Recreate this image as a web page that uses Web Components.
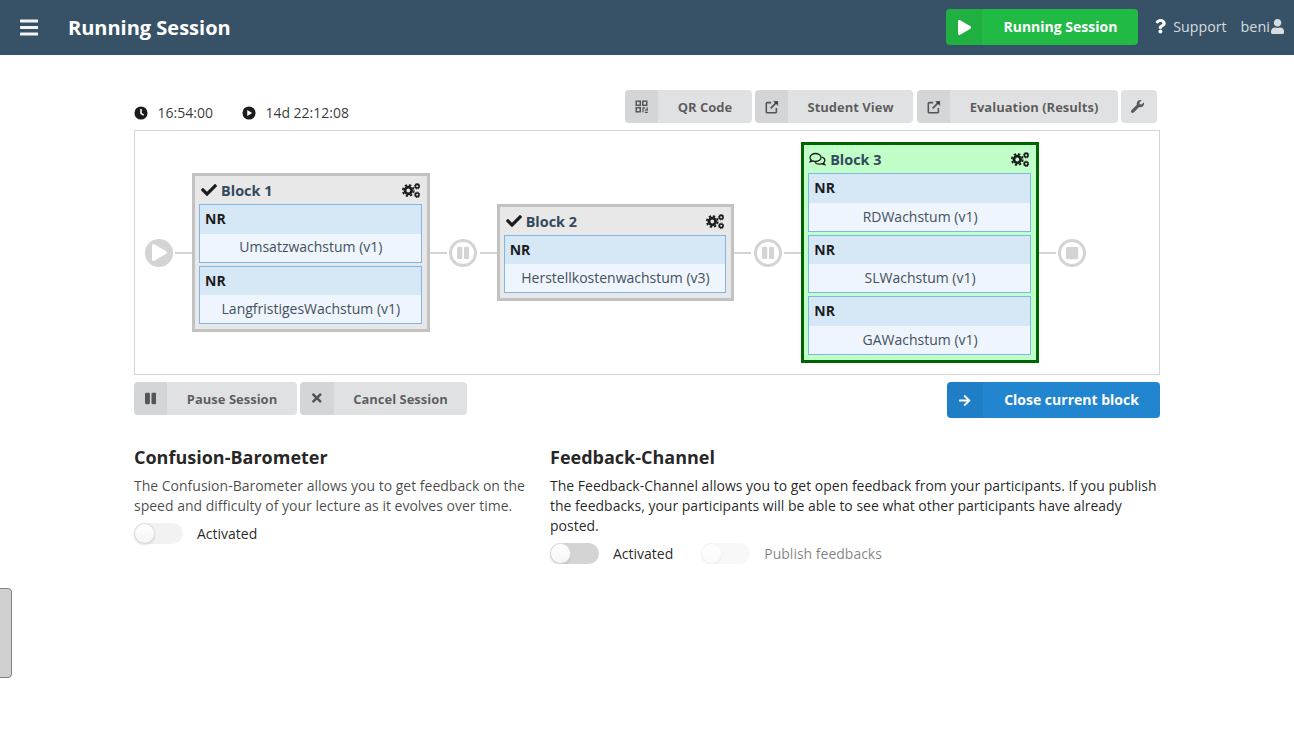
<!DOCTYPE html>
<html lang="en">
<head>
<meta charset="utf-8">
<title>Running Session</title>
<style>
  html, body { margin: 0; padding: 0; background: #fff; }
  body { font-family: "Open Sans", "Liberation Sans", sans-serif; font-size: 14px; color: rgba(0, 0, 0, 0.87); }
</style>
</head>
<body>
<session-page></session-page>

<script>
const ICONS = {
  bars: `<svg viewBox="0 0 448 512"><path d="M16 132h416c8.837 0 16-7.163 16-16V76c0-8.837-7.163-16-16-16H16C7.163 60 0 67.163 0 76v40c0 8.837 7.163 16 16 16zm0 160h416c8.837 0 16-7.163 16-16v-40c0-8.837-7.163-16-16-16H16c-8.837 0-16 7.163-16 16v40c0 8.837 7.163 16 16 16zm0 160h416c8.837 0 16-7.163 16-16v-40c0-8.837-7.163-16-16-16H16c-8.837 0-16 7.163-16 16v40c0 8.837 7.163 16 16 16z"/></svg>`,
  check: `<svg viewBox="0 0 512 512"><path d="M173.898 439.404l-166.4-166.4c-9.997-9.997-9.997-26.206 0-36.204l36.203-36.204c9.997-9.998 26.207-9.998 36.204 0L192 312.69 432.095 72.596c9.997-9.997 26.207-9.997 36.204 0l36.203 36.204c9.997 9.997 9.997 26.206 0 36.204l-294.4 294.401c-9.998 9.997-26.207 9.997-36.204-.001z"/></svg>`,
  play: `<svg viewBox="0 0 448 512"><path d="M424.4 214.7L72.4 6.6C43.8-10.3 0 6.1 0 47.9V464c0 37.5 40.7 60.1 72.4 41.3l352-208c31.4-18.5 31.5-64.1 0-82.6z"/></svg>`,
  pause: `<svg viewBox="0 0 448 512"><path d="M144 479H48c-26.5 0-48-21.5-48-48V79c0-26.5 21.5-48 48-48h96c26.5 0 48 21.5 48 48v352c0 26.5-21.5 48-48 48zm304-48V79c0-26.5-21.5-48-48-48h-96c-26.5 0-48 21.5-48 48v352c0 26.5 21.5 48 48 48h96c26.5 0 48-21.5 48-48z"/></svg>`,
  stop: `<svg viewBox="0 0 448 512"><path d="M400 32H48C21.5 32 0 53.5 0 80v352c0 26.5 21.5 48 48 48h352c26.5 0 48-21.5 48-48V80c0-26.5-21.5-48-48-48z"/></svg>`,
  times: `<svg viewBox="0 0 352 512"><path d="M242.72 256l100.07-100.07c12.28-12.28 12.28-32.19 0-44.48l-22.24-22.24c-12.28-12.28-32.19-12.28-44.48 0L176 189.28 75.93 89.21c-12.28-12.28-32.19-12.28-44.48 0L9.21 111.45c-12.28 12.28-12.28 32.19 0 44.48L109.28 256 9.21 356.07c-12.28 12.28-12.28 32.19 0 44.48l22.24 22.24c12.28 12.28 32.2 12.28 44.48 0L176 322.72l100.07 100.07c12.28 12.28 32.2 12.28 44.48 0l22.24-22.24c12.28-12.28 12.28-32.19 0-44.48L242.72 256z"/></svg>`,
  arrow: `<svg viewBox="0 0 448 512"><path d="M190.5 66.9l22.2-22.2c9.4-9.4 24.6-9.4 33.9 0L441 239c9.4 9.4 9.4 24.6 0 33.9L246.6 467.3c-9.4 9.4-24.6 9.4-33.9 0l-22.2-22.2c-9.5-9.5-9.3-25 .4-34.3L311.4 296H24c-13.3 0-24-10.7-24-24v-32c0-13.3 10.7-24 24-24h287.4L190.9 101.2c-9.8-9.3-10-24.8-.4-34.3z"/></svg>`,
  user: `<svg viewBox="0 0 448 512"><path d="M224 256c70.7 0 128-57.3 128-128S294.7 0 224 0 96 57.3 96 128s57.3 128 128 128zm89.6 32h-16.7c-22.2 10.2-46.9 16-72.9 16s-50.6-5.8-72.9-16h-16.7C60.2 288 0 348.2 0 422.4V464c0 26.5 21.5 48 48 48h352c26.5 0 48-21.5 48-48v-41.6c0-74.2-60.2-134.4-134.4-134.4z"/></svg>`,
  question: `<svg viewBox="0 0 384 512"><path d="M202.021 0C122.202 0 70.503 32.703 29.914 91.026c-7.363 10.58-5.093 25.086 5.178 32.874l43.138 32.709c10.373 7.865 25.132 6.026 33.253-4.148 25.049-31.381 43.63-49.449 82.757-49.449 30.764 0 68.816 19.799 68.816 49.631 0 22.552-18.617 34.134-48.993 51.164-35.423 19.86-82.299 44.576-82.299 106.405V320c0 13.255 10.745 24 24 24h72.471c13.255 0 24-10.745 24-24v-5.773c0-42.86 125.268-44.645 125.268-160.627C377.504 66.256 286.902 0 202.021 0zM192 373.459c-38.196 0-69.271 31.075-69.271 69.271 0 38.195 31.075 69.27 69.271 69.27s69.271-31.075 69.271-69.271-31.075-69.27-69.271-69.27z"/></svg>`,
  wrench: `<svg viewBox="0 0 512 512"><path d="M507.73 109.1c-2.24-9.03-13.54-12.09-20.12-5.51l-74.36 74.36-67.88-11.31-11.31-67.88 74.36-74.36c6.62-6.62 3.43-17.9-5.66-20.16-47.38-11.74-99.55.91-136.58 37.93-39.64 39.64-50.55 97.1-34.05 147.2L18.74 402.76c-24.99 24.99-24.99 65.51 0 90.5 24.99 24.99 65.51 24.99 90.5 0l213.21-213.21c50.12 16.71 107.47 5.68 147.37-34.22 37.07-37.07 49.7-89.32 37.91-136.73z"/></svg>`,
  clock: `<svg viewBox="0 0 16 16"><circle cx="8" cy="8" r="7.5"/><path d="M8 3.5V8.4l3 2" fill="none" stroke="#fff" stroke-width="1.8"/></svg>`,
  playcircle: `<svg viewBox="0 0 16 16"><circle cx="8" cy="8" r="7.5"/><path d="M6 4.6v6.8L11.6 8z" fill="#fff"/></svg>`,
  external: `<svg viewBox="0 0 16 16" fill="none" stroke="currentColor"><path d="M7 3H2.6A1.1 1.1 0 0 0 1.5 4.1v9.3a1.1 1.1 0 0 0 1.1 1.1h9.3a1.1 1.1 0 0 0 1.1-1.1V9" stroke-width="1.8"/><path d="M6.5 9.5L13.2 2.8" stroke-width="2"/><path d="M9.2 1H15v5.8z" fill="currentColor" stroke="none"/></svg>`,
  qrcode: `<svg viewBox="0 0 16 16" fill="none" stroke="currentColor" stroke-width="1.8"><rect x="1.5" y="1.5" width="5" height="5"/><rect x="9.5" y="1.5" width="5" height="5"/><rect x="1.5" y="9.5" width="5" height="5"/><path d="M9 9.8h3.5M9.8 9v6M12 12.5h3.8M15 9v3M12 15.2h3.8" stroke-width="1.5"/></svg>`,
  comments: `<svg viewBox="0 0 18 16" fill="none" stroke="currentColor" stroke-width="1.4"><path d="M7 1.6c-3.2 0-5.9 1.9-5.9 4.3 0 1 .5 1.9 1.2 2.6-.2.8-.7 1.5-1.2 2 1.1-.1 2.2-.5 3-1.1.9.4 1.9.7 2.9.7 3.2 0 5.9-1.9 5.9-4.2S10.2 1.6 7 1.6z"/><path d="M13.9 5.5c1.8.6 3 1.9 3 3.4 0 1-.5 1.9-1.2 2.6.2.9.7 1.5 1.2 2-1.1-.1-2.2-.5-3-1.1-.9.4-1.9.6-2.9.6-2 0-3.7-.8-4.7-2"/></svg>`,
  cogs: `<svg viewBox="0 0 18 15" fill="none" stroke="currentColor"><circle cx="6.3" cy="7.5" r="3.3" stroke-width="2.8"/><circle cx="6.3" cy="7.5" r="5.5" stroke-width="1.7" stroke-dasharray="2.4 1.92"/><circle cx="15.2" cy="3.2" r="1.8" stroke-width="1.6"/><circle cx="15.2" cy="3.2" r="2.8" stroke-width=".8" stroke-dasharray="1.2 1"/><circle cx="15.2" cy="11.8" r="1.8" stroke-width="1.6"/><circle cx="15.2" cy="11.8" r="2.8" stroke-width=".8" stroke-dasharray="1.2 1"/></svg>`
};

class UiIcon extends HTMLElement {
  connectedCallback() {
    if (this.shadowRoot) return;
    const root = this.attachShadow({ mode: "open" });
    const size = this.getAttribute("size") || 14;
    root.innerHTML = `
      <style>
        :host { display: inline-flex; align-items: center; justify-content: center; flex: none; height: ${size}px; fill: currentColor; }
        svg { display: block; height: 100%; width: auto; }
      </style>
      ${ICONS[this.getAttribute("name")] || ""}
    `;
  }
}

class LabeledButton extends HTMLElement {
  connectedCallback() {
    if (this.shadowRoot) return;
    const root = this.attachShadow({ mode: "open" });
    const icon = this.getAttribute("icon");
    const size = this.getAttribute("icon-size") || 14;
    root.innerHTML = `
      <style>
        :host {
          --bg: #e0e1e2;
          --fg: rgba(0, 0, 0, 0.6);
          --h: 33px;
          --side: 33px;
          --fs: 13px;
          display: inline-flex;
          height: var(--h);
          background: var(--bg);
          color: var(--fg);
          border-radius: 4px;
          overflow: hidden;
          font-size: var(--fs);
          font-weight: 700;
        }
        :host([color="green"]) { --bg: #21ba45; --fg: #fff; --h: 36px; --side: 36px; --fs: 14px; }
        :host([color="blue"]) { --bg: #2185d0; --fg: #fff; --h: 36px; --side: 36px; --fs: 14px; }
        .side {
          box-sizing: border-box;
          width: var(--side);
          display: flex;
          align-items: center;
          justify-content: center;
          padding-bottom: var(--lift, 0);
          background: rgba(0, 0, 0, 0.05);
        }
        .text {
          flex: 1;
          display: flex;
          align-items: center;
          justify-content: center;
          padding: 0 19px;
          white-space: nowrap;
        }
        :host([color]) .text { padding-bottom: 2px; }
        :host([icon-only]) .side { background: none; }
        :host([icon-only]) .text { display: none; }
      </style>
      <span class="side"><ui-icon name="${icon}" size="${size}"></ui-icon></span>
      <span class="text"><slot></slot></span>
    `;
  }
}

class AppHeader extends HTMLElement {
  constructor() {
    super();
    this.attachShadow({ mode: "open" }).innerHTML = `
      <style>
        :host {
          display: flex;
          align-items: center;
          height: 55px;
          padding: 0 10px 0 20px;
          background: #375266;
          color: #fff;
        }
        h1 { margin: 0 0 0 29.6px; font-size: 20px; font-weight: 700; flex: 1; }
        labeled-button { width: 192px; margin-top: -1px; }
        .item { display: inline-flex; align-items: center; padding-bottom: 2px; color: rgba(255, 255, 255, 0.8); font-size: 14.4px; }
        .support { margin-left: 17px; gap: 7px; font-size: 14.2px; }
        .support ui-icon { color: #fff; }
        .user { margin-left: 14px; gap: 1px; }
        .menu { color: #f1f3f5; }
      </style>
      <ui-icon class="menu" name="bars" size="21"></ui-icon>
      <h1>Running Session</h1>
      <labeled-button color="green" icon="play" icon-size="15">Running Session</labeled-button>
      <span class="item support"><ui-icon name="question" size="14.5"></ui-icon>Support</span>
      <span class="item user">beni<ui-icon name="user" size="15"></ui-icon></span>
    `;
  }
}

class SessionToolbar extends HTMLElement {
  constructor() {
    super();
    this.attachShadow({ mode: "open" }).innerHTML = `
      <style>
        :host { display: flex; align-items: flex-end; justify-content: space-between; height: 33px; }
        .times { display: flex; gap: 29px; font-size: 14px; line-height: 19px; margin-bottom: 1px; }
        .times span { display: inline-flex; align-items: center; gap: 9.5px; color: rgba(0, 0, 0, 0.8); }
        .times ui-icon { color: #1b1c1d; }
        .buttons { display: flex; gap: 3px; margin-right: 3px; }
        .buttons .wide { margin-left: 1px; }
        .buttons .last { width: 36px; }
      </style>
      <div class="times">
        <span><ui-icon name="clock" size="14"></ui-icon>16:54:00</span>
        <span><ui-icon name="playcircle" size="14"></ui-icon>14d 22:12:08</span>
      </div>
      <div class="buttons">
        <labeled-button style="width:127px" icon="qrcode" icon-size="13">QR Code</labeled-button>
        <labeled-button style="width:158px" icon="external" icon-size="14">Student View</labeled-button>
        <labeled-button class="wide" style="width:201px" icon="external" icon-size="14">Evaluation (Results)</labeled-button>
        <labeled-button class="last" icon-only icon="wrench" icon-size="13"></labeled-button>
      </div>
    `;
  }
}

class QuestionCard extends HTMLElement {
  constructor() {
    super();
    this.attachShadow({ mode: "open" }).innerHTML = `
      <style>
        :host {
          display: block;
          border: 1px solid #7fb6e6;
          background: #eef5fc;
          font-size: 14px;
          line-height: 19px;
        }
        .type { box-sizing: border-box; height: 28.5px; display: flex; align-items: center; padding: 0 0 1.3px 5px; background: #d6e7f6; font-weight: 700; color: #1b1c1d; }
        .name { box-sizing: border-box; height: 28px; display: flex; align-items: center; justify-content: center; padding: 0 0 1.4px 1px; color: #45505c; }
      </style>
      <div class="type">NR</div>
      <div class="name"><slot></slot></div>
    `;
  }
}

class SessionBlock extends HTMLElement {
  connectedCallback() {
    if (this.shadowRoot) return;
    const icon = this.getAttribute("icon");
    const isCheck = icon === "check";
    this.attachShadow({ mode: "open" }).innerHTML = `
      <style>
        :host {
          display: block;
          box-sizing: border-box;
          width: 237.6px;
          flex: none;
          border: 3px solid #c2c2c2;
          background: #e8e8e8;
          padding: 0 5px 5px 4px;
        }
        :host([active]) { border-color: #006400; background: #c0ffc8; }
        .title { box-sizing: border-box; display: flex; align-items: center; height: 28px; padding-top: 0.8px; font-size: 14.4px; font-weight: 700; color: #34495e; }
        .title .state { color: #1b1c1d; margin: 0 4px 0 ${isCheck ? 2 : 1}px; }
        .title .cogs { color: #1b1c1d; margin-left: auto; margin-right: 2px; }
        .cards { display: flex; flex-direction: column; gap: 3px; }
      </style>
      <div class="title">
        <ui-icon class="state" name="${icon}" size="${isCheck ? 16 : 15}"></ui-icon>
        <span>${this.getAttribute("title")}</span>
        <ui-icon class="cogs" name="cogs" size="15"></ui-icon>
      </div>
      <div class="cards"><slot></slot></div>
    `;
  }
}

class TimelineNode extends HTMLElement {
  connectedCallback() {
    if (this.shadowRoot) return;
    const kind = this.getAttribute("kind");
    this.attachShadow({ mode: "open" }).innerHTML = `
      <style>
        :host {
          display: flex;
          box-sizing: border-box;
          align-items: center;
          justify-content: center;
          flex: none;
          width: 28px;
          height: 28px;
          border-radius: 50%;
          border: 3px solid #d4d4d5;
          color: #d4d4d5;
          background: #fff;
        }
        :host([kind="play"]) { background: #d4d4d5; color: #fff; padding-left: 2px; }
      </style>
      <ui-icon name="${kind}" size="${kind === "play" ? 17 : 14}"></ui-icon>
    `;
  }
}

class TimelineLine extends HTMLElement {
  constructor() {
    super();
    this.attachShadow({ mode: "open" }).innerHTML = `
      <style>
        :host { display: block; flex: none; width: 17px; height: 2px; margin-left: 2.5px; background: #d4d4d5; }
        :host([trail]) { margin: 0 2.5px 0 0; }
      </style>
    `;
  }
}

class SessionTimeline extends HTMLElement {
  constructor() {
    super();
    this.attachShadow({ mode: "open" }).innerHTML = `
      <style>
        :host {
          display: flex;
          align-items: center;
          box-sizing: border-box;
          height: 245px;
          margin-top: 7px;
          padding-left: 9.6px;
          border: 1px solid #d4d4d5;
        }
      </style>
      <slot></slot>
    `;
  }
}

class ToggleSwitch extends HTMLElement {
  constructor() {
    super();
    this.attachShadow({ mode: "open" }).innerHTML = `
      <style>
        :host { display: inline-flex; align-items: center; gap: 14px; font-size: 14px; line-height: 21px; color: rgba(0, 0, 0, 0.87); }
        .track { position: relative; width: 49px; height: 21px; border-radius: 10.5px; background: rgba(0, 0, 0, 0.05); }
        .knob {
          position: absolute;
          left: 0;
          top: 0;
          width: 21px;
          height: 21px;
          border-radius: 50%;
          background: linear-gradient(#fff, #f5f5f5);
          box-shadow: 0 1px 2px 0 rgba(34, 36, 38, 0.15), 0 0 0 1px rgba(34, 36, 38, 0.15) inset;
        }
        :host([strong]) .track { background: rgba(0, 0, 0, 0.17); }
        :host([disabled]) { color: rgba(0, 0, 0, 0.5); }
        :host([disabled]) .track { opacity: 0.5; }
        :host([disabled]) .knob { box-shadow: 0 1px 2px 0 rgba(34, 36, 38, 0.08), 0 0 0 1px rgba(34, 36, 38, 0.08) inset; }
      </style>
      <span class="track"><span class="knob"></span></span>
      <span><slot></slot></span>
    `;
  }
}

class InfoPanel extends HTMLElement {
  connectedCallback() {
    if (this.shadowRoot) return;
    this.attachShadow({ mode: "open" }).innerHTML = `
      <style>
        :host { display: block; --body: rgba(0, 0, 0, 0.87); }
        :host([muted]) { --body: rgba(0, 0, 0, 0.72); }
        h2 { margin: 0 0 7px; font-size: 18px; line-height: 24px; font-weight: 700; color: rgba(0, 0, 0, 0.87); }
        .body { font-size: 14px; line-height: 20px; color: var(--body); }
        .controls { display: flex; gap: 28px; margin-top: 7px; }
      </style>
      <h2>${this.getAttribute("heading")}</h2>
      <div class="body"><slot></slot></div>
      <div class="controls"><slot name="controls"></slot></div>
    `;
  }
}

class SideTab extends HTMLElement {
  constructor() {
    super();
    this.attachShadow({ mode: "open" }).innerHTML = `
      <style>
        :host {
          position: fixed;
          left: -1px;
          top: 588px;
          box-sizing: border-box;
          width: 13px;
          height: 90px;
          background: #d0d0d0;
          border: 1px solid #808080;
          border-radius: 0 4px 4px 0;
        }
      </style>
    `;
  }
}

class SessionPage extends HTMLElement {
  constructor() {
    super();
    this.attachShadow({ mode: "open" }).innerHTML = `
      <style>
        :host { display: block; }
        main { width: 1026px; margin: 0 auto; padding-top: 35px; }
        .actions { display: flex; gap: 3px; margin-top: 7px; height: 36px; }
        .actions .close { margin-left: auto; width: 213px; }
        .panels { display: grid; grid-template-columns: 400px 1fr; column-gap: 16px; margin-top: 27px; }
      </style>
      <app-header></app-header>
      <main>
        <session-toolbar></session-toolbar>
        <session-timeline>
          <timeline-node kind="play"></timeline-node>
          <timeline-line></timeline-line>
          <session-block title="Block 1" icon="check">
            <question-card>Umsatzwachstum (v1)</question-card>
            <question-card>LangfristigesWachstum (v1)</question-card>
          </session-block>
          <timeline-line trail></timeline-line>
          <timeline-node kind="pause"></timeline-node>
          <timeline-line></timeline-line>
          <session-block title="Block 2" icon="check">
            <question-card>Herstellkostenwachstum (v3)</question-card>
          </session-block>
          <timeline-line trail></timeline-line>
          <timeline-node kind="pause"></timeline-node>
          <timeline-line></timeline-line>
          <session-block title="Block 3" icon="comments" active>
            <question-card>RDWachstum (v1)</question-card>
            <question-card>SLWachstum (v1)</question-card>
            <question-card>GAWachstum (v1)</question-card>
          </session-block>
          <timeline-line trail></timeline-line>
          <timeline-node kind="stop"></timeline-node>
        </session-timeline>
        <div class="actions">
          <labeled-button style="width:163px;--lift:1px" icon="pause" icon-size="13">Pause Session</labeled-button>
          <labeled-button style="width:167px;--side:34px;--lift:1px" icon="times" icon-size="14">Cancel Session</labeled-button>
          <labeled-button class="close" color="blue" icon="arrow" icon-size="13">Close current block</labeled-button>
        </div>
        <div class="panels">
          <info-panel heading="Confusion-Barometer" muted>
            The Confusion-Barometer allows you to get feedback on the speed and difficulty of your lecture as it evolves over time.
            <toggle-switch slot="controls">Activated</toggle-switch>
          </info-panel>
          <info-panel heading="Feedback-Channel">
            The Feedback-Channel allows you to get open feedback from your participants. If you publish the feedbacks, your participants will be able to see what other participants have already posted.
            <toggle-switch slot="controls" strong>Activated</toggle-switch>
            <toggle-switch slot="controls" disabled>Publish feedbacks</toggle-switch>
          </info-panel>
        </div>
      </main>
      <side-tab></side-tab>
    `;
  }
}

customElements.define("ui-icon", UiIcon);
customElements.define("labeled-button", LabeledButton);
customElements.define("app-header", AppHeader);
customElements.define("session-toolbar", SessionToolbar);
customElements.define("question-card", QuestionCard);
customElements.define("session-block", SessionBlock);
customElements.define("timeline-node", TimelineNode);
customElements.define("timeline-line", TimelineLine);
customElements.define("session-timeline", SessionTimeline);
customElements.define("toggle-switch", ToggleSwitch);
customElements.define("info-panel", InfoPanel);
customElements.define("side-tab", SideTab);
customElements.define("session-page", SessionPage);
</script>
</body>
</html>
